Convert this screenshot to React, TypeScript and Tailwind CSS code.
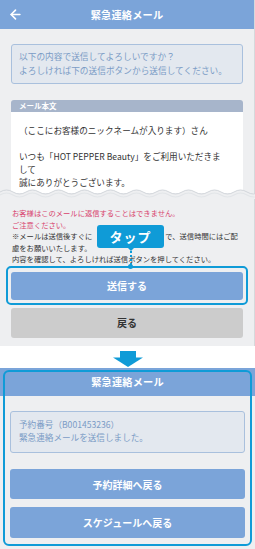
import { ArrowLeft } from 'lucide-react';

const wave = (y: number) => {
  let d = `M0 ${y} Q6.5 ${y - 4} 13 ${y}`;
  for (let x = 26; x <= 273; x += 13) d += ` T${x} ${y}`;
  return d;
};

export default function App() {
  return (
    <div className="w-[255px] h-[549px] bg-white font-['Noto_Sans_CJK_JP','Noto_Sans',sans-serif] overflow-hidden">
      {/* top screen */}
      <div className="h-[346px] bg-[#eeeff1] border-r border-[#d6d9dc]">
        <div className="relative h-[29px] bg-[#7ba4d9] flex items-center justify-center">
          <ArrowLeft className="absolute left-[8px] top-[7px] w-[15px] h-[15px] text-white" strokeWidth={2.6} />
          <span className="text-white font-bold text-[10.2px] tracking-[0.2px]">緊急連絡メール</span>
        </div>

        <div className="mx-[11px] mt-[15px] h-[40px] rounded-[3px] border border-[#a9c0dd] bg-[#e3e8ef] px-[7px] pt-[5px] text-[8.7px] leading-[14px] text-[#7b9cc6] whitespace-nowrap">
          以下の内容で送信してよろしいですか？<br />
          よろしければ下の送信ボタンから送信してください。
        </div>

        <div className="mx-[11px] mt-[16px]">
          <div className="h-[12px] rounded-t-[3px] bg-[#a7b5cb] px-[8px] text-[7.5px] leading-[12px] font-bold text-white">メール本文</div>
          <div className="h-[81px] bg-white px-[8px] pt-[12px] text-[8.6px] leading-[13px] text-[#333] overflow-hidden">
            （ここにお客様のニックネームが入ります）さん<br />
            <br />
            いつも「HOT PEPPER Beauty」をご利用いただきま<br />
            して<br />
            誠にありがとうございます。
          </div>
        </div>

        <svg width="255" height="12" viewBox="0 0 255 12" className="block -mt-[6px]">
          <path d={`${wave(5)} L273 12 L0 12 Z`} fill="#eeeff1" />
          <path d={wave(5)} fill="none" stroke="#d2d6db" strokeWidth="1" />
          <path d={wave(8)} fill="none" stroke="#e2e5e8" strokeWidth="1.2" />
        </svg>

        <div className="mt-[9px] px-[12px] text-[7.3px] leading-[11.6px] text-[#333] whitespace-nowrap">
          <span className="text-[#d8416c]">お客様はこのメールに返信することはできません。<br />ご注意ください。</span><br />
          ※メールは送信後すぐに<span className="invisible">お客様に届けられるの</span>で、送信時間にはご配<br />
          慮をお願いいたします。<br />
          内容を確認して、よろしければ送信ボタンを押してください。
        </div>

        <div className="relative mx-[6px] rounded-[5px] border-2 border-[#0f9bd7] px-[3px] pt-[4px] pb-[3px]">
          <div className="absolute left-[89px] top-[-43px] flex flex-col items-center">
            <div className="w-[67px] h-[23px] rounded-[3px] bg-[#0f9bd7] flex items-center justify-center text-white font-bold text-[13px] tracking-[1px]">
              タップ
            </div>
            <div className="w-0 h-0 border-l-[3px] border-r-[3px] border-t-[3px] border-l-transparent border-r-transparent border-t-[#0f9bd7]" />
            <div className="w-[2px] h-[14px] border-l-2 border-dotted border-[#0f9bd7]" />
            <div className="w-[5px] h-[5px] -mt-[1px] rounded-full bg-[#0f9bd7]" />
          </div>
          <div className="h-[28px] rounded-[3px] bg-[#7ba4d9] flex items-center justify-center text-white font-bold text-[10px]">
            送信する
          </div>
        </div>

        <div className="mx-[11px] mt-[3px] h-[30px] rounded-[3px] bg-[#cccccc] flex items-center justify-center text-[#333] font-bold text-[10px]">
          戻る
        </div>
      </div>

      {/* arrow */}
      <div className="h-[22px] bg-white flex justify-center pt-[5px]">
        <svg width="30" height="16" viewBox="0 0 30 16">
          <rect x="7" y="0" width="16" height="7" fill="#0f9bd7" />
          <path d="M0 6.5 L30 6.5 L15 16 Z" fill="#0f9bd7" />
        </svg>
      </div>

      {/* bottom screen */}
      <div className="relative h-[181px] bg-[#eeeff1]">
        <div className="h-[28px] bg-[#7ba4d9] flex items-center justify-center">
          <span className="text-white font-bold text-[10.2px] tracking-[0.2px]">緊急連絡メール</span>
        </div>

        <div className="mx-[10px] mt-[15px] h-[42px] rounded-[3px] border border-[#a9c0dd] bg-[#e3e8ef] px-[8px] pt-[6px] text-[8.6px] leading-[13px] text-[#7b9cc6] whitespace-nowrap">
          予約番号（B001453236）<br />
          緊急連絡メールを送信しました。
        </div>

        <div className="mx-[10px] mt-[16px] h-[30px] rounded-[3px] bg-[#7ba4d9] flex items-center justify-center text-white font-bold text-[10px]">
          予約詳細へ戻る
        </div>
        <div className="mx-[10px] mt-[8px] h-[31px] rounded-[3px] bg-[#7ba4d9] flex items-center justify-center text-white font-bold text-[10px]">
          スケジュールへ戻る
        </div>

        <div className="absolute left-[3px] right-[3px] top-[2px] bottom-[3px] rounded-[6px] border-2 border-[#0f9bd7] pointer-events-none" />
      </div>
    </div>
  );
}
